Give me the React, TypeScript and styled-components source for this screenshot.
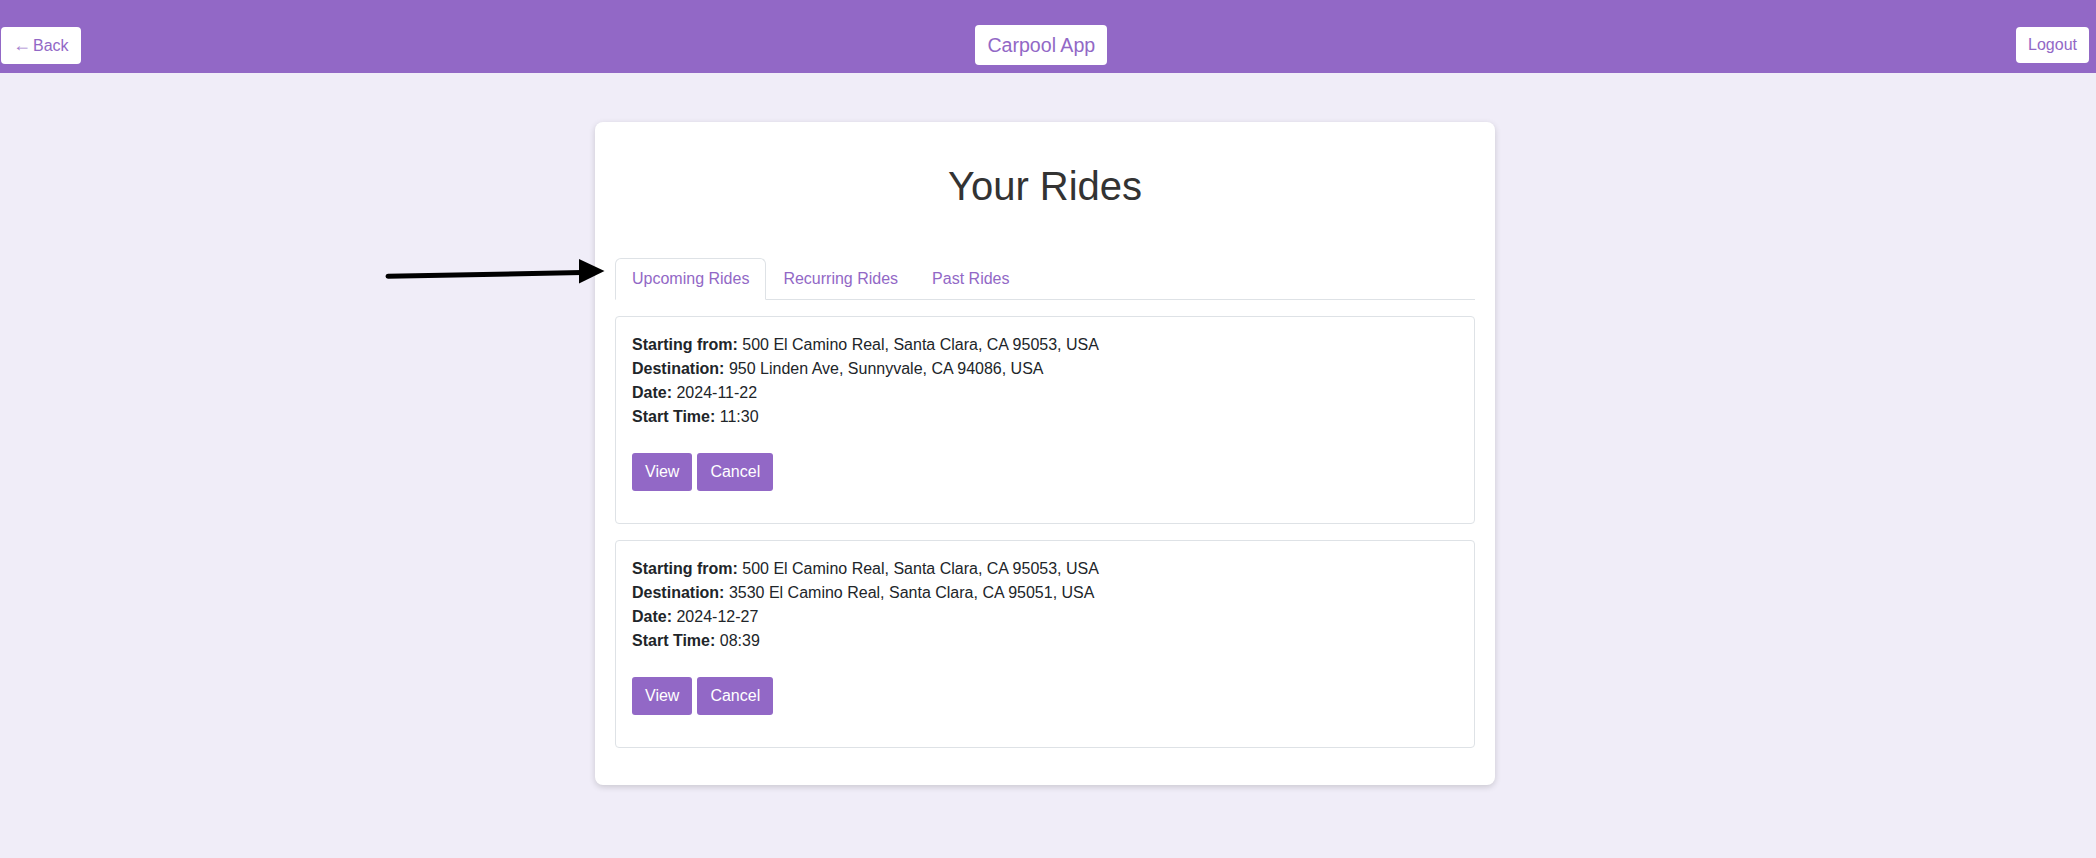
import React from "react";
import styled, { createGlobalStyle } from "styled-components";

const PURPLE = "#9268c6";

const GlobalStyle = createGlobalStyle`
  html, body {
    margin: 0;
    padding: 0;
    background: #f0edf8;
    font-family: "Liberation Sans", Arial, Helvetica, sans-serif;
    color: #212529;
  }
  * { box-sizing: border-box; }
`;

const Page = styled.div`
  position: relative;
  min-height: 858px;
  background: #f0edf8;
`;

const Header = styled.header`
  height: 73px;
  background: ${PURPLE};
  display: flex;
  align-items: center;
  justify-content: space-between;
  padding: 25px 7px 8px 1px;
`;

const HeaderButton = styled.button`
  background: #fff;
  color: ${PURPLE};
  border: none;
  border-radius: 4px;
  padding: 6px 12px;
  font-family: inherit;
  font-size: 16px;
  line-height: 24px;
  cursor: pointer;
`;

const BackArrow = styled.span`
  display: inline-block;
  font-size: 18px;
  margin-right: 2px;
  opacity: 0.85;
`;

const Brand = styled.div`
  background: #fff;
  color: ${PURPLE};
  border-radius: 4px;
  padding: 6px 12px;
  font-size: 19.6px;
  line-height: 28px;
  margin-right: 14px;
`;

const Main = styled.main`
  padding: 49px 6px 40px 0;
  display: flex;
  justify-content: center;
`;

const Card = styled.section`
  width: 900px;
  background: #fff;
  border-radius: 8px;
  box-shadow: 0 2px 6px rgba(0, 0, 0, 0.16);
  padding: 20px 20px 21px;
`;

const Title = styled.h1`
  margin: 20px 0 48px;
  text-align: center;
  font-size: 40px;
  line-height: 48px;
  font-weight: 400;
  color: #333;
`;

const Tabs = styled.ul`
  list-style: none;
  margin: 0 0 16px;
  padding: 0;
  display: flex;
  border-bottom: 1px solid #dee2e6;
`;

const Tab = styled.li<{ $active?: boolean }>`
  margin-bottom: -1px;
  padding: 8px 16px;
  font-size: 16px;
  line-height: 24px;
  color: ${PURPLE};
  background: ${(p) => (p.$active ? "#fff" : "transparent")};
  border: 1px solid ${(p) => (p.$active ? "#dee2e6" : "transparent")};
  border-bottom-color: ${(p) => (p.$active ? "#fff" : "transparent")};
  border-radius: 6px 6px 0 0;
  cursor: pointer;
`;

const RideCard = styled.article`
  border: 1px solid #dee2e6;
  border-radius: 4px;
  padding: 16px;
  margin-bottom: 16px;
`;

const InfoLine = styled.div`
  font-size: 16px;
  line-height: 24px;
  color: #212529;
  b {
    font-weight: 700;
  }
`;

const ButtonRow = styled.div`
  display: flex;
  gap: 5px;
  margin: 24px 0 16px;
`;

const ActionButton = styled.button`
  background: ${PURPLE};
  color: #fff;
  border: none;
  border-radius: 3px;
  padding: 0 13px;
  height: 38px;
  font-family: inherit;
  font-size: 16px;
  cursor: pointer;
`;

const Pointer = styled.svg`
  position: absolute;
  left: 380px;
  top: 252px;
  overflow: visible;
`;

type Ride = { from: string; to: string; date: string; time: string };

const rides: Ride[] = [
  {
    from: "500 El Camino Real, Santa Clara, CA 95053, USA",
    to: "950 Linden Ave, Sunnyvale, CA 94086, USA",
    date: "2024-11-22",
    time: "11:30",
  },
  {
    from: "500 El Camino Real, Santa Clara, CA 95053, USA",
    to: "3530 El Camino Real, Santa Clara, CA 95051, USA",
    date: "2024-12-27",
    time: "08:39",
  },
];

export default function App() {
  return (
    <Page>
      <GlobalStyle />
      <Header>
        <HeaderButton>
          <BackArrow>←</BackArrow>Back
        </HeaderButton>
        <Brand>Carpool App</Brand>
        <HeaderButton>Logout</HeaderButton>
      </Header>
      <Main>
        <Card>
          <Title>Your Rides</Title>
          <Tabs>
            <Tab $active>Upcoming Rides</Tab>
            <Tab>Recurring Rides</Tab>
            <Tab>Past Rides</Tab>
          </Tabs>
          {rides.map((r, i) => (
            <RideCard key={i}>
              <InfoLine>
                <b>Starting from:</b> {r.from}
              </InfoLine>
              <InfoLine>
                <b>Destination:</b> {r.to}
              </InfoLine>
              <InfoLine>
                <b>Date:</b> {r.date}
              </InfoLine>
              <InfoLine>
                <b>Start Time:</b> {r.time}
              </InfoLine>
              <ButtonRow>
                <ActionButton>View</ActionButton>
                <ActionButton>Cancel</ActionButton>
              </ButtonRow>
            </RideCard>
          ))}
        </Card>
      </Main>
      <Pointer width="230" height="40" viewBox="0 0 230 40">
        <line x1="8" y1="24.3" x2="202" y2="20.5" stroke="#000" strokeWidth="5" strokeLinecap="round" />
        <polygon points="199,7 224.5,19 199,31.5" fill="#000" />
      </Pointer>
    </Page>
  );
}
